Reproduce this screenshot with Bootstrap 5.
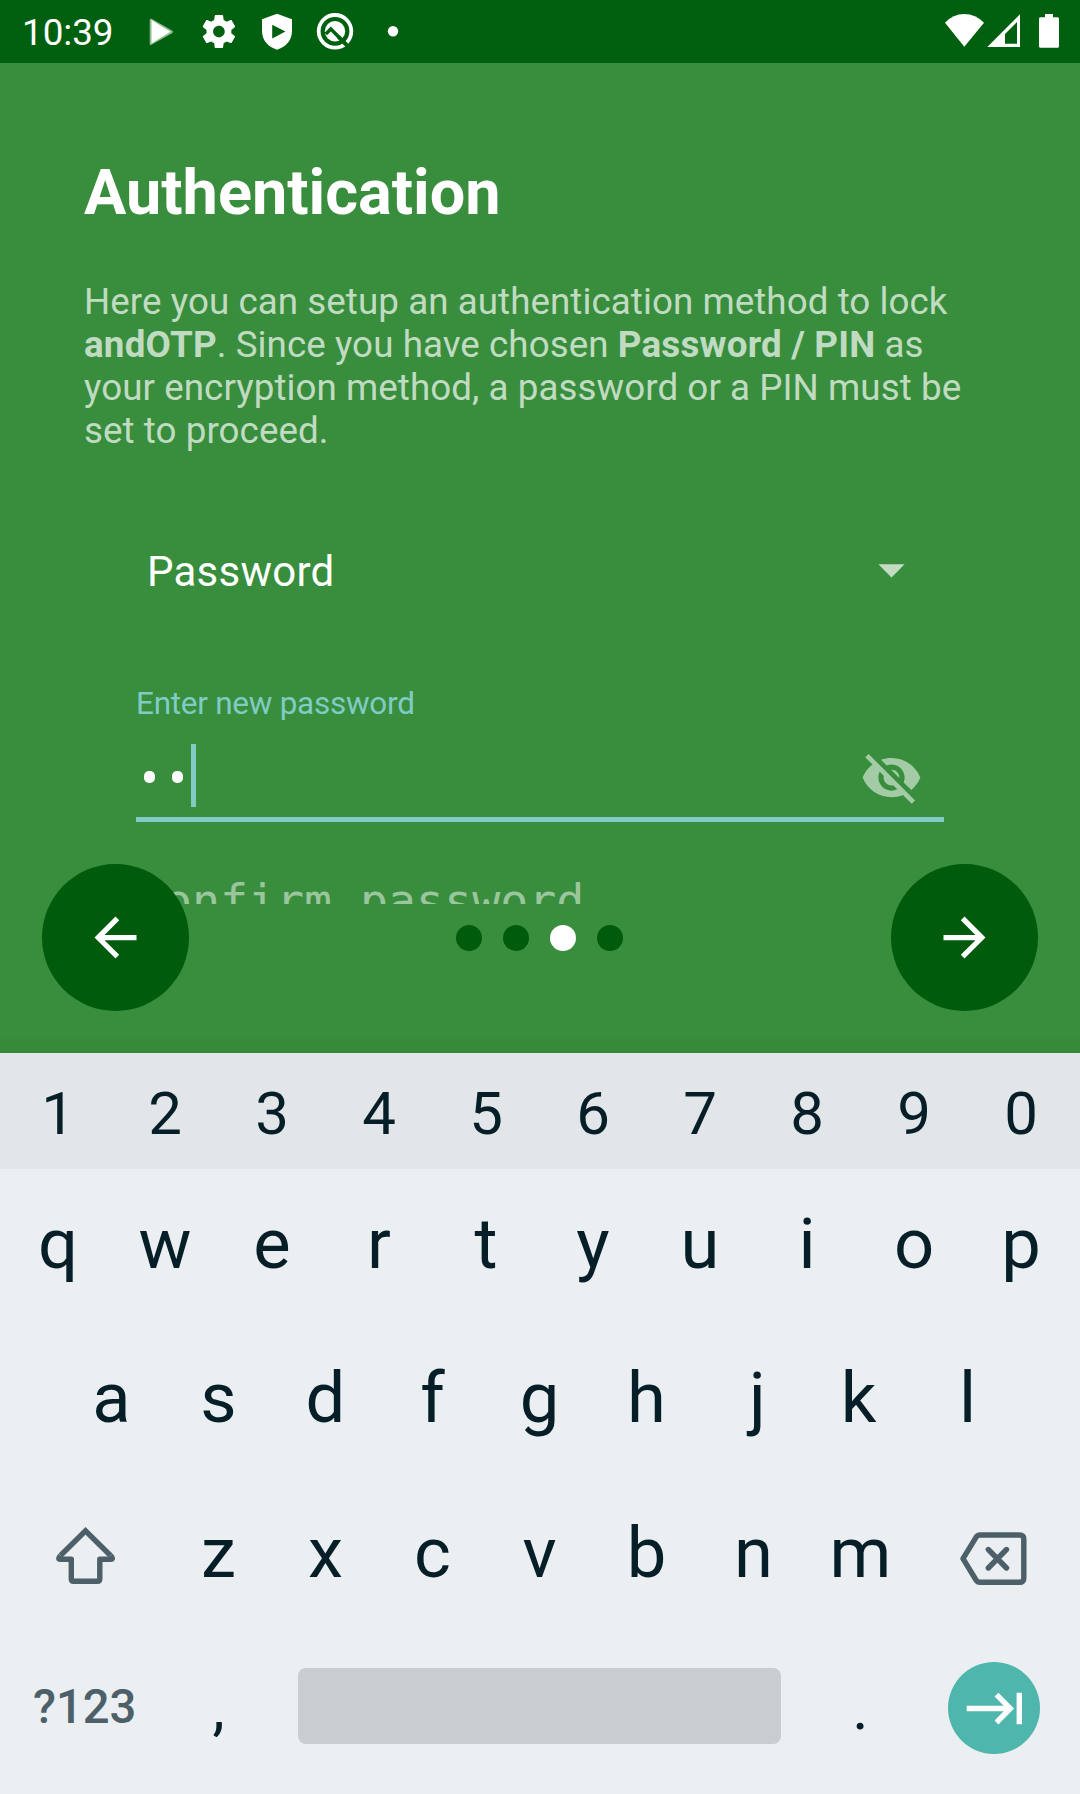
<!DOCTYPE html>
<html lang="en">
<head>
<meta charset="utf-8">
<title>andOTP setup</title>
<meta name="viewport" content="width=device-width, initial-scale=1">
<link href="https://cdn.jsdelivr.net/npm/bootstrap@5.3.0/dist/css/bootstrap.min.css" rel="stylesheet">
<style>
body{font-family:Roboto,"Liberation Sans",sans-serif;width:1080px;height:1794px;overflow:hidden;background:#388e3c;color:#fff}
svg{display:block;flex:none}
.statusbar{height:63px;background:#00600f}
.clock{font-size:36.75px;line-height:66px;padding-left:22px;width:148px}
.intro{height:990px;background:linear-gradient(#388e3c 970px,#36893a 990px)}
.slide-body{height:841px;padding:93px 84px 0}
.title{font-size:63px;line-height:74px;font-weight:700;margin:0}
.desc{font-size:36.75px;line-height:43px;margin:50px -8px 0 0;color:rgba(255,255,255,.7);letter-spacing:.06px}
.desc b{font-weight:700;letter-spacing:.2px}
.method{margin:86px 73px 0 63px;height:67px;font-size:42px;line-height:67px;letter-spacing:.25px}
.form-area{margin:80px 52px 0}
.field-label{font-size:31.5px;line-height:37px;color:#80cbc4;letter-spacing:-.27px}
.field{height:100px;border-bottom:5px solid #80cbc4;padding:22px 21px 0 8px}
.pw-dot{width:11px;height:12px;border-radius:5px;background:#fff;margin:27px 17px 0 0}
.caret-bar{width:5px;height:63px;background:#80cbc4;margin-left:-9px}
.hint{font-family:"DejaVu Sans Mono",monospace;font-size:46.6px;line-height:56px;margin-top:51px;letter-spacing:-.04px;color:rgba(255,255,255,.5)}
.bottom-nav{bottom:42px;padding:0 42px}
.fab{width:147px;height:147px;background:#005b0d}
.pager{gap:21px;padding:1px 1px 0 0}
.pager span{width:26px;height:26px;background:#005b0d;border-radius:50%}
.pager .on{background:#fff}
.keyboard{height:741px;background:#ebeff2;color:#061e27}
.numbers{height:116px;background:#e2e6e9;font-size:60px;line-height:121px;padding:0 5px 0 4.5px}
.letters{height:154.5px;font-size:70.5px;line-height:151.8px;padding:0 4.5px}
.letters.home{padding-left:58px;line-height:149.8px}
.k{width:107px;flex:none;text-align:center}
.k-j{padding-left:8px}
.k-k{padding-right:4px}
.wide{width:160.5px;flex:none}
.sym{font-size:47.2px;font-weight:500;line-height:149.8px;color:#4d6069;text-align:center}
.punct{font-size:62px;line-height:149.8px}
.spacebar{width:483px;height:76px;border-radius:8px;background:#c9cdd0;margin:35.5px 26px 0}
.next{width:92px;height:92px;background:#4eb6ac;margin-top:29.5px}
</style>
<script src="https://cdn.jsdelivr.net/npm/bootstrap@5.3.0/dist/js/bootstrap.bundle.min.js"></script>
</head>
<body>
<header class="statusbar d-flex justify-content-between">
  <div class="d-flex">
    <div class="clock">10:39</div>
    <svg width="260" height="63" viewBox="148 0 260 63" fill="#fff">
      <path d="M151 18.7Q149.7 18.7 149.7 20V44Q149.7 45.6 151.5 44.8L172 33.2Q174 31.7 172 30.4L152 19Z" fill="#8fbb92"/>
      <path d="M151.5 20L170.5 31.7 151.5 43.5Z"/>
      <g transform="translate(199 11.6) scale(1.66)"><path d="M19.43 12.98c.04-.32.07-.64.07-.98s-.03-.66-.07-.98l2.11-1.65c.19-.15.24-.42.12-.64l-2-3.46c-.12-.22-.39-.3-.61-.22l-2.49 1c-.52-.4-1.08-.73-1.69-.98l-.38-2.65C14.46 2.18 14.25 2 14 2h-4c-.25 0-.46.18-.49.42l-.38 2.65c-.61.25-1.17.59-1.69.98l-2.49-1c-.23-.09-.49 0-.61.22l-2 3.46c-.13.22-.07.49.12.64l2.11 1.65c-.04.32-.07.65-.07.98s.03.66.07.98l-2.11 1.65c-.19.15-.24.42-.12.64l2 3.46c.12.22.39.3.61.22l2.49-1c.52.4 1.08.73 1.69.98l.38 2.65c.03.24.24.42.49.42h4c.25 0 .46-.18.49-.42l.38-2.65c.61-.25 1.17-.59 1.69-.98l2.49 1c.23.09.49 0 .61-.22l2-3.46c.12-.22.07-.49-.12-.64l-2.11-1.65zM12 15.5c-1.93 0-3.5-1.57-3.5-3.5s1.57-3.5 3.5-3.5 3.5 1.57 3.500 3.500-1.570 3.500-3.500 3.500z"/></g>
      <path fill-rule="evenodd" d="M277 13.7L292 19.2V30.5Q292 44.5 277 49.8 262 44.5 262 30.5V19.2ZM272.2 24.800V38.400L285.400 31.600Z"/>
      <circle cx="335" cy="31.3" r="16.3" fill="none" stroke="#fff" stroke-width="3.8"/>
      <circle cx="335" cy="31.3" r="10.2"/>
      <path d="M325.800 34L330.800 29 346 44.200" fill="none" stroke="#00600f" stroke-width="3.400"/>
      <path d="M338 36.300L348 46.300" stroke="#00600f" stroke-width="4" fill="none"/>
      <circle cx="393" cy="31.2" r="5.2"/>
    </svg>
  </div>
  <svg width="140" height="63" viewBox="940 0 140 63" fill="#fff">
    <path d="M964.3 46.8L945 22.8Q953 14 964.3 14T984 22.8Z"/>
    <path fill-rule="evenodd" d="M1020 14.3V47H987.3ZM1017 22L1005 34V43.7H1017Z"/>
    <path d="M1045 14H1053V17.2H1057.5Q1059 17.2 1059 18.7V46.3Q1059 47.8 1057.5 47.8H1040.5Q1039 47.8 1039 46.3V18.7Q1039 17.2 1040.5 17.2H1045Z"/>
  </svg>
</header>

<main class="intro position-relative">
  <section class="slide-body overflow-hidden">
    <h1 class="title">Authentication</h1>
    <p class="desc">Here you can setup an authentication method to lock<br><b>andOTP</b>. Since you have chosen <b>Password / PIN</b> as<br>your encryption method, a password or a PIN must be<br>set to proceed.</p>
    <div class="method d-flex justify-content-between align-items-start">
      <span>Password</span>
      <svg width="63" height="63" viewBox="0 0 24 24"><path d="M7 10l5 5 5-5z" fill="#fff" fill-opacity=".7"/></svg>
    </div>
    <div class="form-area">
      <div class="field-label">Enter new password</div>
      <div class="field d-flex justify-content-between">
        <div class="d-flex"><span class="pw-dot"></span><span class="pw-dot"></span><span class="caret-bar"></span></div>
        <svg width="63" height="63" viewBox="0 0 24 24" class="mt-0" fill="#fff" fill-opacity=".54"><path transform="translate(0 .8)" d="M12 7c2.76 0 5 2.24 5 5 0 .65-.13 1.26-.36 1.83l2.92 2.92c1.51-1.26 2.7-2.89 3.43-4.75-1.73-4.39-6-7.5-11-7.5-1.4 0-2.74.25-3.98.7l2.16 2.16C10.74 7.13 11.35 7 12 7zM2 4.27l2.28 2.28.46.46C3.08 8.3 1.78 10.02 1 12c1.73 4.39 6 7.5 11 7.5 1.55 0 3.03-.3 4.38-.84l.42.42L19.73 22 21 20.73 3.27 3 2 4.27zM7.53 9.8l1.55 1.55c-.05.21-.08.43-.08.65 0 1.66 1.34 3 3 3 .22 0 .44-.03.65-.08l1.55 1.55c-.67.33-1.41.53-2.2.53-2.76 0-5-2.24-5-5 0-.79.2-1.53.53-2.2zm4.31-.78l3.15 3.15.02-.16c0-1.66-1.34-3-3-3l-.17.01z"/></svg>
      </div>
      <div class="hint text-nowrap">Confirm password</div>
    </div>
  </section>
  <nav class="bottom-nav position-absolute start-0 end-0 d-flex justify-content-between align-items-center">
    <a class="fab rounded-circle d-flex align-items-center justify-content-center"><svg width="63" height="63" viewBox="0 0 24 24" fill="#fff"><path d="M20 11H7.83l5.59-5.59L12 4l-8 8 8 8 1.41-1.41L7.83 13H20v-2z"/></svg></a>
    <div class="pager d-flex"><span></span><span></span><span class="on"></span><span></span></div>
    <a class="fab rounded-circle d-flex align-items-center justify-content-center"><svg width="63" height="63" viewBox="0 0 24 24" fill="#fff"><path d="M12 4l-1.41 1.41L16.17 11H4v2h12.17l-5.58 5.59L12 20l8-8z"/></svg></a>
  </nav>
</main>

<section class="keyboard">
  <div class="numbers d-flex"><span class="k">1</span><span class="k">2</span><span class="k">3</span><span class="k">4</span><span class="k">5</span><span class="k">6</span><span class="k">7</span><span class="k">8</span><span class="k">9</span><span class="k">0</span></div>
  <div class="letters d-flex"><span class="k">q</span><span class="k">w</span><span class="k">e</span><span class="k">r</span><span class="k">t</span><span class="k">y</span><span class="k">u</span><span class="k">i</span><span class="k">o</span><span class="k">p</span></div>
  <div class="letters home d-flex"><span class="k">a</span><span class="k">s</span><span class="k">d</span><span class="k">f</span><span class="k">g</span><span class="k">h</span><span class="k k-j">j</span><span class="k k-k">k</span><span class="k">l</span></div>
  <div class="letters d-flex">
    <span class="wide"><svg width="160" height="154" viewBox="4.5 1478 160 154" fill="none" stroke="#4d6069" stroke-width="5.4" stroke-linejoin="round"><path stroke-linejoin="miter" d="M60 1555.500L85 1530.800 110 1555.500"/><path d="M60 1555.500Q56.500 1559.300 60 1559.300H70.800V1579Q70.800 1581.300 73 1581.300H97Q99.300 1581.300 99.300 1579V1559.300H110Q113.700 1559.300 110 1555.500"/></svg></span>
    <span class="k">z</span><span class="k">x</span><span class="k">c</span><span class="k">v</span><span class="k">b</span><span class="k">n</span><span class="k">m</span>
    <span class="wide"><svg width="160" height="154" viewBox="914 1478 160 154" fill="none" stroke="#4d6069" stroke-width="5.4" stroke-linejoin="round"><path d="M980 1535H1019.500Q1023.800 1535 1023.800 1539V1578.200Q1023.800 1582.300 1019.500 1582.300H980Q977.500 1582.300 976 1580L963 1558.700 976 1537.300Q977.500 1535 980 1535Z"/><path d="M988.300 1549.500L1006.500 1568M1006.500 1549.500L988.300 1568" stroke-linecap="round"/></svg></span>
  </div>
  <div class="letters d-flex align-items-start">
    <span class="wide sym">?123</span>
    <span class="k punct">,</span>
    <span class="spacebar"></span>
    <span class="k punct">.</span>
    <span class="wide d-flex justify-content-center"><span class="next rounded-circle"><svg width="92" height="92" viewBox="948 1662 92 92" fill="none" stroke="#fff" stroke-width="5.4"><path d="M966.700 1708.500H1010M996.500 1694.600L1010.300 1708.500 996.500 1722.500M1019.300 1692.700V1724.300"/></svg></span></span>
  </div>
</section>
</body>
</html>
